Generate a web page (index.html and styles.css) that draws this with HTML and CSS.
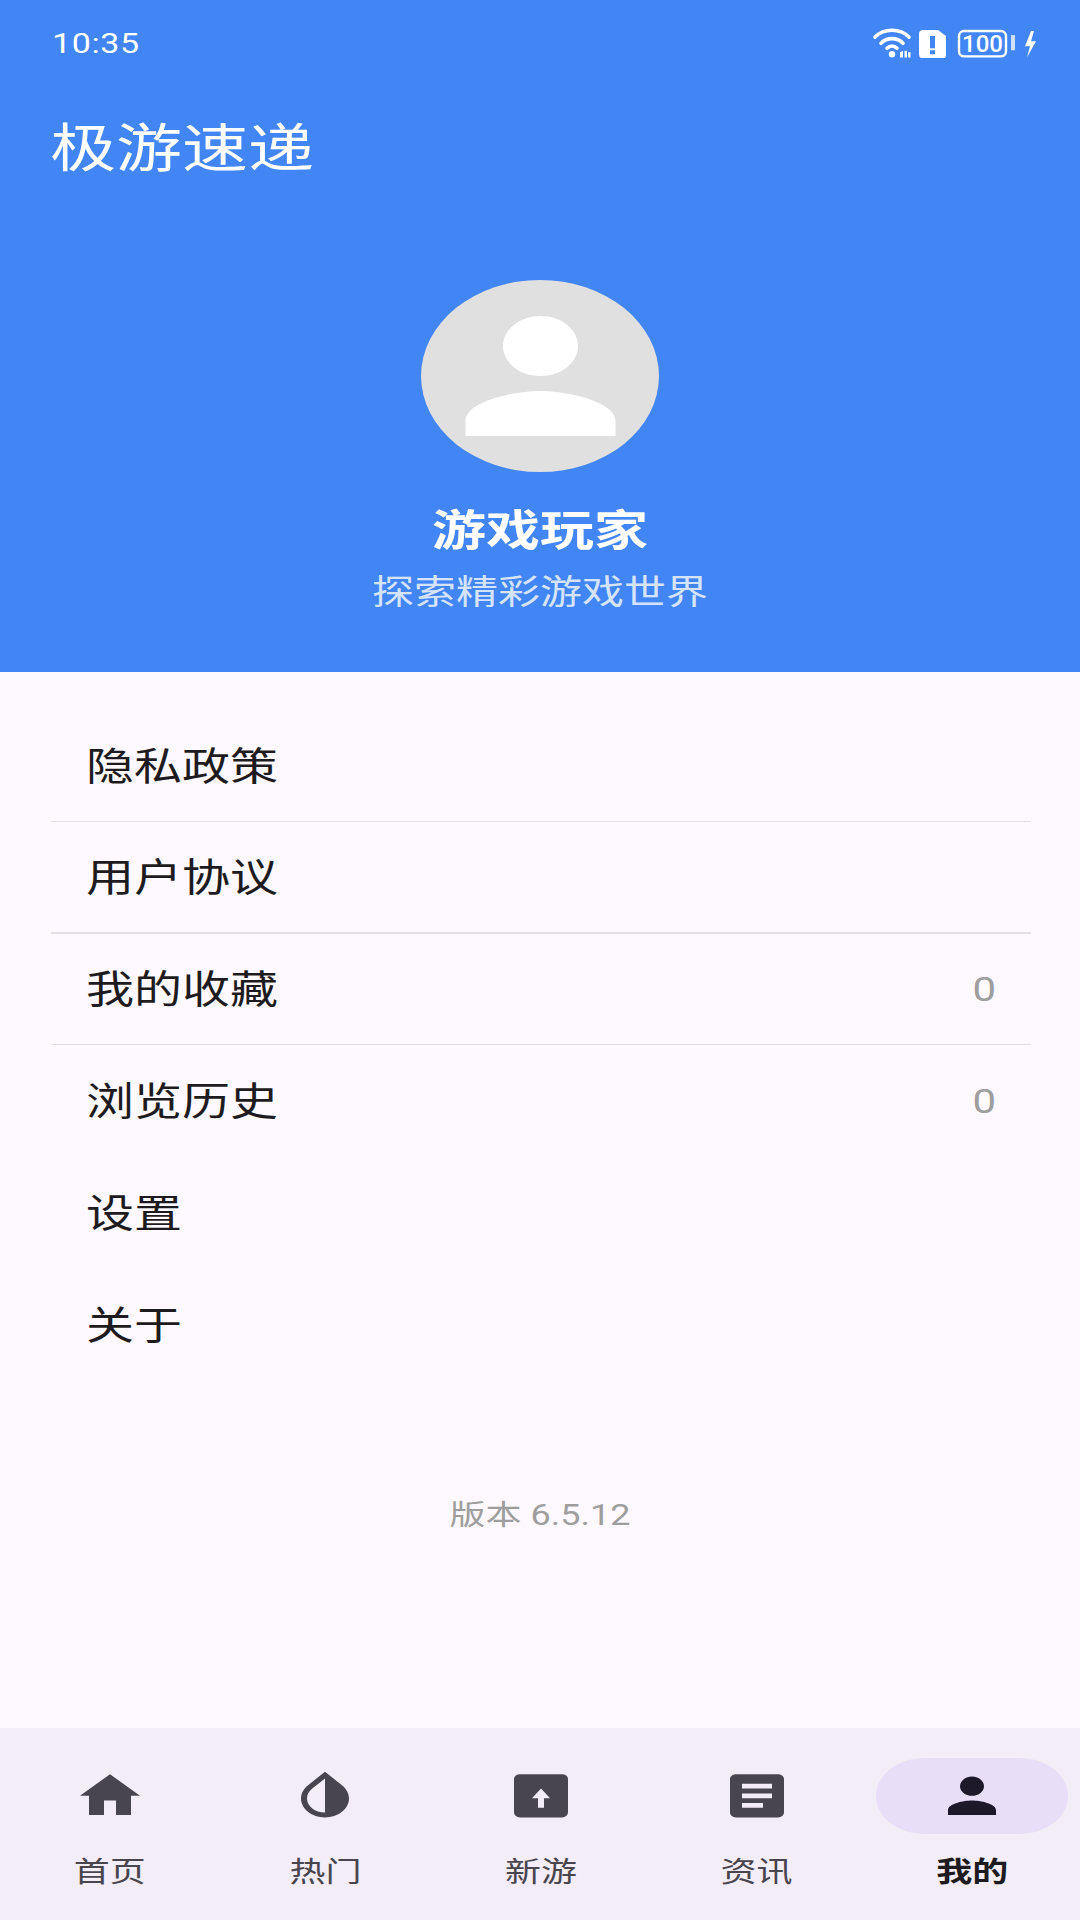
FILE: index.html
```html
<!DOCTYPE html>
<html lang="zh">
<head>
<meta charset="utf-8">
<title>极游速递</title>
<link rel="stylesheet" href="styles.css">
</head>
<body>
<div class="app">
  <header class="hero">
    <div class="status">
      <span class="time squash">10:35</span>
      <svg class="status-icons" viewBox="0 0 172 30" preserveAspectRatio="none">
        <g transform="translate(2 0)">
          <g fill="none" stroke="#fff" stroke-width="3.600" stroke-linecap="round">
            <path d="M2 9C11 0 27 0 36 9"/>
            <path d="M8 15C14 9 24 9 30 15"/>
            <path d="M14 20C17 17 21 17 24 20"/>
          </g>
          <circle cx="19" cy="26" r="3.200" fill="#fff"/>
          <path d="M27 29v-5l3-1.500v6.500zM31.500 29v-6.500h2.500v6.500zM35 29v-5h2.500v5z" fill="#fff"/>
        </g>
        <path d="M48 6a4 4 0 0 1 4-4h15l8 6v19a3 3 0 0 1-3 3H52a4 4 0 0 1-4-4z" fill="#fff"/>
        <path d="M59 8h5v12h-5zM59 22h5v4h-5z" fill="#4285f4"/>
        <rect x="88" y="3" width="47" height="25" rx="5" fill="none" stroke="#fff" stroke-width="2.400"/>
        <text x="111.500" y="24" class="batt" text-anchor="middle">100</text>
        <rect x="140" y="7" width="4" height="15" fill="#fff" opacity=".75"/>
        <path d="M160 3l-6 15h5l-3 11 9-16h-5l3-10z" fill="#fff"/>
      </svg>
    </div>
    <h1 class="title squash">极游速递</h1>
    <div class="avatar">
      <svg class="avatar-icon" viewBox="0 0 24 24" preserveAspectRatio="none"><path d="M12 12c2.210 0 4-1.790 4-4s-1.790-4-4-4-4 1.790-4 4 1.790 4 4 4zm0 2c-2.670 0-8 1.340-8 4v2h16v-2c0-2.660-5.330-4-8-4z"/></svg>
    </div>
    <div class="name squash">游戏玩家</div>
    <div class="tagline squash">探索精彩游戏世界</div>
  </header>

  <main class="body">
    <ul class="menu">
      <li class="row line"><span class="squash">隐私政策</span></li>
      <li class="row line"><span class="squash">用户协议</span></li>
      <li class="row line"><span class="squash">我的收藏</span><span class="count squash">0</span></li>
      <li class="row"><span class="squash">浏览历史</span><span class="count squash">0</span></li>
      <li class="row"><span class="squash">设置</span></li>
      <li class="row"><span class="squash">关于</span></li>
    </ul>
    <p class="version squash">版本 6.5.12</p>
  </main>

  <nav class="nav">
    <div class="tab">
      <div class="pill"><svg class="ico" viewBox="0 0 24 24" preserveAspectRatio="none"><path d="M10 20v-6h4v6h5v-8h3L12 3 2 12h3v8z"/></svg></div>
      <span class="tab-label squash">首页</span>
    </div>
    <div class="tab">
      <div class="pill"><svg class="ico" viewBox="0 0 24 24" preserveAspectRatio="none"><path fill-rule="evenodd" d="M12 4.810V19c-3.310 0-6-2.630-6-5.870 0-1.560.620-3.030 1.750-4.140L12 4.810M12 2 6.350 7.560C4.900 9 4 10.960 4 13.130 4 17.480 7.580 21 12 21s8-3.520 8-7.870c0-2.170-.900-4.130-2.350-5.570L12 2z"/></svg></div>
      <span class="tab-label squash">热门</span>
    </div>
    <div class="tab">
      <div class="pill"><svg class="ico" viewBox="0 0 24 24" preserveAspectRatio="none"><path fill-rule="evenodd" d="M5 3h14a2 2 0 0 1 2 2v14a2 2 0 0 1-2 2H5a2 2 0 0 1-2-2V5a2 2 0 0 1 2-2zm7 6-3 4h2v4h2v-4h2z"/></svg></div>
      <span class="tab-label squash">新游</span>
    </div>
    <div class="tab">
      <div class="pill"><svg class="ico" viewBox="0 0 24 24" preserveAspectRatio="none"><path d="M19 3H5c-1.100 0-2 .9-2 2v14c0 1.100.9 2 2 2h14c1.100 0 2-.9 2-2V5c0-1.100-.9-2-2-2zm-5 14H7v-2h7v2zm3-4H7v-2h10v2zm0-4H7V7h10v2z"/></svg></div>
      <span class="tab-label squash">资讯</span>
    </div>
    <div class="tab active">
      <div class="pill"><svg class="ico" viewBox="0 0 24 24" preserveAspectRatio="none"><path d="M12 12c2.210 0 4-1.790 4-4s-1.790-4-4-4-4 1.790-4 4 1.790 4 4 4zm0 2c-2.670 0-8 1.340-8 4v2h16v-2c0-2.660-5.330-4-8-4z"/></svg></div>
      <span class="tab-label squash">我的</span>
    </div>
  </nav>
</div>
</body>
</html>
```

FILE: styles.css
```css
* { box-sizing: border-box; }
html, body { margin: 0; padding: 0; background: #fef9ff; }
body { font-family: Roboto, "Noto Sans CJK SC", sans-serif; }

/* The reference is a taller screen squeezed vertically, so all glyphs are 80% tall. */
.squash { display: block; transform: scaleY(.8); }

.app {
  width: 1080px;
  height: 1920px;
  display: flex;
  flex-direction: column;
  overflow: hidden;
}

.hero {
  height: 672px;
  background: #4285f4;
  color: #fff;
  display: flex;
  flex-direction: column;
  align-items: center;
}
.status {
  width: 100%;
  height: 86px;
  padding: 0 37px 0 52px;
  display: flex;
  align-items: center;
  justify-content: space-between;
}
.time { font-size: 34px; letter-spacing: .6px; line-height: 40px; }
.status-icons { width: 172px; height: 30.400px; }
.batt { font: 500 24px Roboto, sans-serif; fill: #fff; }
.title {
  align-self: flex-start;
  margin: 25px 0 0 50px;
  font-size: 66px;
  font-weight: 400;
  line-height: 76px;
}
.avatar {
  width: 238px;
  height: 192px;
  margin-top: 93px;
  border-radius: 50%;
  background: #e0e0e0;
  display: flex;
  align-items: center;
  justify-content: center;
}
.avatar-icon { width: 225px; height: 180px; fill: #fff; }
.name { margin-top: 29px; font-size: 54px; font-weight: 700; line-height: 62px; }
.tagline { margin-top: 6px; font-size: 42px; line-height: 48px; color: rgba(255, 255, 255, .8); }

.body { flex: 1; padding-top: 38.400px; }
.menu { list-style: none; margin: 0; padding: 0 49px 0 51px; }
.row {
  height: 111.680px;
  padding: 2.500px 35px 0;
  display: flex;
  align-items: center;
  justify-content: space-between;
  font-size: 48px;
  line-height: 60px;
  color: #1d1b20;
}
.line { border-bottom: 1px solid #e2e0e4; }
.line:nth-child(2) { border-bottom-width: 2px; }
.count { font-size: 42px; color: #9e9e9e; }
.version { margin: 115px 0 0; text-align: center; font-size: 36px; line-height: 40px; color: #9e9e9e; }

.nav {
  height: 192px;
  display: grid;
  grid-template-columns: repeat(5, 1fr);
  background: #f3edf7;
  padding: 29.500px 0 0 2px;
}
.tab { display: flex; flex-direction: column; align-items: center; }
.pill {
  width: 192px;
  height: 76.800px;
  border-radius: 48px / 38.400px;
  display: flex;
  align-items: center;
  justify-content: center;
}
.ico { width: 72px; height: 57.600px; fill: #49454f; }
.tab-label { margin-top: 19px; font-size: 36px; line-height: 38px; color: #49454f; }
.active .pill { background: #e8def8; }
.active .ico { fill: #1d192b; }
.active .tab-label { font-weight: 700; color: #1d1b20; }
```
